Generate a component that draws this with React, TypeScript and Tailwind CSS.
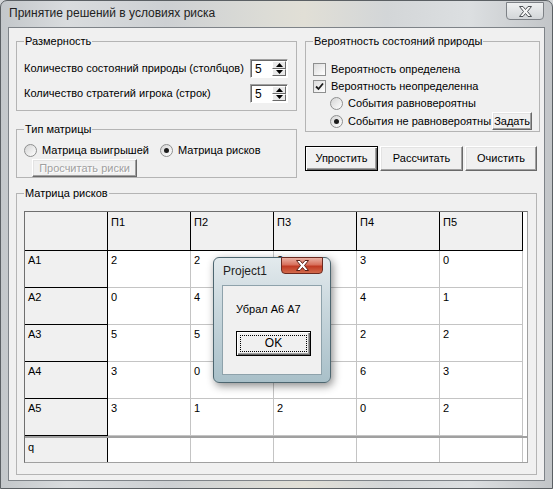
import React from 'react';

const cols = ['П1', 'П2', 'П3', 'П4', 'П5'];
// values under the message box are hidden in the picture
const rows: { name: string; vals: string[] }[] = [
    { name: 'A1', vals: ['2', '2', '2', '3', '0'] },
    { name: 'A2', vals: ['0', '4', '', '4', '1'] },
    { name: 'A3', vals: ['5', '5', '', '2', '2'] },
    { name: 'A4', vals: ['3', '0', '', '6', '3'] },
    { name: 'A5', vals: ['3', '1', '2', '0', '2'] },
];

function Spin({ value }: { value: string }) {
    return (
        <div className="flex h-[19px] w-[38px] border border-t-[#a0a0a0] border-l-[#a0a0a0] border-r-white border-b-white bg-white shadow-[inset_1px_1px_0_#696969]">
            <span className="flex-1 pl-[4px] pt-[2px] text-[12px] leading-[15px]">{value}</span>
            <div className="flex w-[15px] flex-col py-px pr-px">
                {[0, 1].map((i) => (
                    <div
                        key={i}
                        className="flex flex-1 items-center justify-center border border-t-white border-l-white border-r-[#696969] border-b-[#696969] bg-[#e9e9e9]"
                    >
                        <svg width="7" height="4" viewBox="0 0 7 4">
                            <path d={i === 0 ? 'M0 4 L3.5 0 L7 4 Z' : 'M0 0 L3.5 4 L7 0 Z'} fill="#000" />
                        </svg>
                    </div>
                ))}
            </div>
        </div>
    );
}

function Check({ checked, label }: { checked?: boolean; label: string }) {
    return (
        <div className="flex h-[16px] items-center gap-[5px] whitespace-nowrap">
            <div className="flex h-[13px] w-[13px] shrink-0 items-center justify-center border border-[#8e8f8f] bg-[linear-gradient(135deg,#dcdcdc,#ffffff)]">
                {checked && (
                    <svg width="9" height="9" viewBox="0 0 9 9">
                        <path d="M1 4.5 L3.5 7 L8 1.5" fill="none" stroke="#1a1a1a" strokeWidth="1.8" />
                    </svg>
                )}
            </div>
            <span>{label}</span>
        </div>
    );
}

function Radio({ checked, label }: { checked?: boolean; label: string }) {
    return (
        <div className="flex h-[16px] items-center gap-[5px] whitespace-nowrap">
            <div className="flex h-[13px] w-[13px] shrink-0 items-center justify-center rounded-full border border-[#8e8f8f] bg-[linear-gradient(135deg,#d4d4d4,#ffffff)]">
                {checked && <div className="h-[5px] w-[5px] rounded-full bg-[#1c1c1c]" />}
            </div>
            <span>{label}</span>
        </div>
    );
}

function Btn({ children, def, className }: { children: React.ReactNode; def?: boolean; className?: string }) {
    return (
        <div
            className={`flex shrink-0 items-center justify-center whitespace-nowrap bg-[#f0f0f0] ${def
                ? 'border border-black shadow-[inset_1px_1px_0_#fff,inset_-1px_-1px_0_#696969,inset_-2px_-2px_0_#a0a0a0]'
                : 'border border-t-white border-l-white border-r-[#696969] border-b-[#696969] shadow-[inset_-1px_-1px_0_#a0a0a0,inset_1px_1px_0_#e3e3e3]'
                } ${className ?? ''}`}
        >
            {children}
        </div>
    );
}

function Group({ title, className, children }: { title: string; className?: string; children: React.ReactNode }) {
    return (
        <fieldset className={`border border-[#b4b4b4] px-[7px] ${className ?? ''}`}>
            <legend className="px-px leading-[13px]">{title}</legend>
            {children}
        </fieldset>
    );
}

function RiskGrid() {
    return (
        <div className="h-[252px] w-[504px] border border-t-[#6f6f6f] border-l-[#6f6f6f] border-r-[#a0a0a0] border-b-[#a0a0a0] bg-white text-[11px]">
            {/* header */}
            <div className="flex h-[39px]">
                <div className="h-full w-[83px] border-r border-b border-black bg-[#f0f0f0]" />
                {cols.map((c) => (
                    <div key={c} className="h-full w-[83px] border-r border-b border-black bg-[#f0f0f0] pl-[3px] pt-[4px]">
                        {c}
                    </div>
                ))}
            </div>
            {rows.map((r) => (
                <div key={r.name} className="flex h-[37px]">
                    <div className="h-full w-[83px] border-r border-b border-black bg-[#f0f0f0] pl-[3px] pt-[3px]">
                        {r.name}
                    </div>
                    {r.vals.map((v, i) => (
                        <div key={i} className="h-full w-[83px] border-r border-b border-[#c4c4c4] pl-[3px] pt-[3px]">
                            {v}
                        </div>
                    ))}
                </div>
            ))}
            <div className="flex h-[26px] border-t-2 border-[#a0a0a0]">
                <div className="h-full w-[83px] border-r border-black bg-[#f0f0f0] pl-[3px] pt-[3px]">q</div>
                {cols.map((c) => (
                    <div key={c} className="h-full w-[83px] border-r border-[#c4c4c4]" />
                ))}
            </div>
        </div>
    );
}

function CloseGlyph({ fill, stroke }: { fill: string; stroke: string }) {
    return (
        <svg width="13" height="11" viewBox="0 0 13 11">
            <path
                d="M0.5 0.5 H4 L6.5 3.5 L9 0.5 H12.5 L8.5 5.5 L12.5 10.5 H9 L6.5 7.5 L4 10.5 H0.5 L4.5 5.5 Z"
                fill={fill}
                stroke={stroke}
                strokeWidth="1"
            />
        </svg>
    );
}

function MessageBox() {
    return (
        <div className="absolute left-[213px] top-[257px] flex h-[126px] w-[118px] flex-col rounded-[6px] border border-[#4d6670] bg-[linear-gradient(180deg,#e3eaed_0%,#c9d7dd_40%,#a9c0c9_100%)] px-[8px] pb-[7px] shadow-[2px_3px_8px_rgba(0,0,0,0.45)]">
            <div className="relative flex h-[27px] items-center pl-px text-[12px] text-[#1e1e1e]">
                Project1
                <div className="absolute right-[-1px] top-[-1px] flex h-[17px] w-[42px] items-center justify-center rounded-b-[4px] border border-[#6b2a20] bg-[linear-gradient(180deg,#eab0a3_0%,#d8705c_45%,#c03a23_55%,#d26a4b_100%)]">
                    <CloseGlyph fill="#ffffff" stroke="#5a2218" />
                </div>
            </div>
            <div className="flex flex-1 flex-col border border-[#8ea2ab] bg-[#f0f0f0]">
                <div className="mt-[17px] pl-[13px] text-[11px]">Убрал А6 А7</div>
                <div className="mt-[15px] ml-[13px] flex h-[25px] w-[75px] items-center justify-center border border-black bg-[#f0f0f0] shadow-[inset_1px_1px_0_#fff,inset_-1px_-1px_0_#696969,inset_-2px_-2px_0_#a0a0a0]">
                    <div className="flex h-[17px] w-[67px] items-center justify-center border border-dotted border-black text-[12px]">
                        OK
                    </div>
                </div>
            </div>
        </div>
    );
}

export default function App() {
    return (
        <div className="relative h-[489px] w-[553px] overflow-hidden bg-[#d3d6d8] font-['Liberation_Sans',Arial,sans-serif] text-[11px] leading-[13px] text-black">
            <div className="flex h-full flex-col rounded-t-[7px] border border-[#5b6064] bg-[linear-gradient(90deg,#c3c7ca_0%,#d9dcde_12%,#cdd0d3_30%,#dcdcd6_48%,#e1dfd6_55%,#d3d6d8_70%,#dcdfe1_85%,#c2c5c8_100%)] px-[7px] pb-[7px]">
                {/* title bar */}
                <div className="flex h-[26px] items-start justify-between">
                    <span className="pl-px pt-[5px] text-[12px] leading-[15px] text-[#222]">Принятие решений в условиях риска</span>
                    <div className="mt-px mr-[1px] flex h-[18px] w-[38px] items-center justify-center rounded-b-[4px] border border-[#7d8186] bg-[linear-gradient(180deg,#eef0f1,#d3d6d9)]">
                        <CloseGlyph fill="#f6f6f6" stroke="#4e5256" />
                    </div>
                </div>

                {/* client area */}
                <div className="flex flex-1 flex-col border border-[#7e8388] bg-[#f0f0f0] pl-[7px] pr-[6px] pt-[7px]">
                    <div className="flex gap-[8px]">
                        {/* left column */}
                        <div className="flex w-[281px] flex-col">
                            <Group title="Размерность" className="h-[76px]">
                                <div className="mt-[11px] flex items-center justify-between pr-[1px]">
                                    <span>Количество состояний природы (столбцов)</span>
                                    <Spin value="5" />
                                </div>
                                <div className="mt-[6px] flex items-center justify-between pr-[1px]">
                                    <span>Количество стратегий игрока (строк)</span>
                                    <Spin value="5" />
                                </div>
                            </Group>
                            <Group title="Тип матрицы" className="mt-[12px] h-[55px]">
                                <div className="mt-[6px] flex items-center">
                                    <Radio label="Матрица выигрышей" />
                                    <div className="ml-[11px]">
                                        <Radio checked label="Матрица рисков" />
                                    </div>
                                </div>
                                <Btn className="mt-[1px] ml-[8px] h-[18px] w-[105px]">
                                    <span className="text-[#a0a0a0] [text-shadow:1px_1px_0_#fff]">Просчитать риски</span>
                                </Btn>
                            </Group>
                        </div>

                        {/* right column */}
                        <div className="flex w-[232px] flex-col">
                            <Group title="Вероятность состояний природы" className="h-[97px]">
                                <div className="mt-[13px] flex flex-col gap-px">
                                    <Check label="Вероятность определена" />
                                    <Check checked label="Вероятность неопределенна" />
                                    <div className="ml-[17px]">
                                        <Radio label="События равновероятны" />
                                    </div>
                                    <div className="ml-[17px] flex items-center">
                                        <Radio checked label="События не равновероятны" />
                                        <Btn className="ml-px h-[18px] w-[40px]">Задать</Btn>
                                    </div>
                                </div>
                            </Group>
                            <div className="mt-[14px] flex gap-[2px]">
                                <Btn def className="h-[25px] w-[73px]">Упростить</Btn>
                                <Btn className="h-[25px] w-[83px]">Рассчитать</Btn>
                                <Btn className="h-[25px] w-[72px]">Очистить</Btn>
                            </div>
                        </div>
                    </div>

                    <Group title="Матрица рисков" className="mt-[9px] w-[521px] pb-[11px]">
                        <div className="mt-[11px]">
                            <RiskGrid />
                        </div>
                    </Group>
                </div>
            </div>
            <MessageBox />
        </div>
    );
}
